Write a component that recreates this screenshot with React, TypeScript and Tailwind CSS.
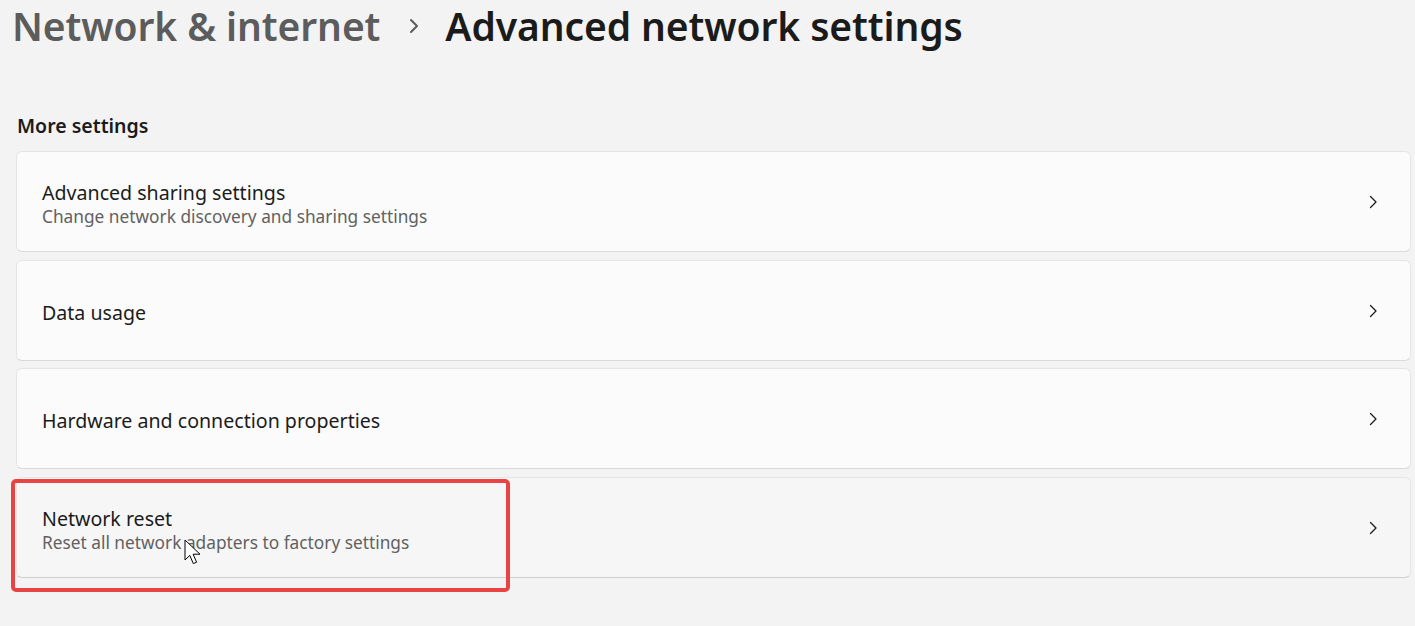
import React from "react";

const Chevron = () => (
  <svg width="16" height="16" viewBox="0 0 16 16" fill="none">
    <path d="M5.5 2.5 L11 8 L5.5 13.5" stroke="#1b1b1b" strokeWidth="1.3" strokeLinecap="round" strokeLinejoin="round" />
  </svg>
);

const Card = ({ title, subtitle, hovered, className = "" }: { title: string; subtitle?: string; hovered?: boolean; className?: string }) => (
  <div
    className={`h-[101px] flex items-center justify-between rounded-[6px] border border-[#e5e5e5] pl-[25px] pr-[29px] ${
      hovered ? "bg-[#f6f6f6] border-b-[#cfcfcf]" : "bg-[#fbfbfb] border-b-[#d9d9d9]"
    } ${className}`}
  >
    <div className="flex flex-col pt-[4px]">
      <div className="text-[19.6px] leading-[26px] text-[#1b1b1b]">{title}</div>
      {subtitle && <div className="text-[17.3px] leading-[22px] text-[#616161]">{subtitle}</div>}
    </div>
    <Chevron />
  </div>
);

export default function App() {
  return (
    <div
      className="w-[1415px] h-[626px] bg-[#f3f3f3] overflow-hidden"
      style={{ fontFamily: '"Noto Sans", "Open Sans", sans-serif' }}
    >
      <div className="flex items-center h-[54px] pl-[12px] pb-[2px] font-semibold text-[39px] leading-[48px] tracking-[-0.1px]">
        <span className="text-[#5c5c5c]">Network &amp; internet</span>
        <span className="ml-[27px] mr-[24px] flex items-center">
          <svg width="14" height="18" viewBox="0 0 14 18" fill="none">
            <path d="M4 3 L10 9 L4 15" stroke="#5c5c5c" strokeWidth="2" strokeLinecap="round" strokeLinejoin="round" />
          </svg>
        </span>
        <span className="text-[#1b1b1b]">Advanced network settings</span>
      </div>
      <div className="pl-[17px] mt-[59px] text-[19.5px] leading-[26px] font-semibold text-[#1b1b1b]">More settings</div>
      <div className="flex flex-col pl-[16px] pr-[4px] mt-[12px]">
        <Card title="Advanced sharing settings" subtitle="Change network discovery and sharing settings" />
        <Card title="Data usage" className="mt-[8px]" />
        <Card title="Hardware and connection properties" className="mt-[7px]" />
        <div className="relative mt-[8px]">
          <Card title="Network reset" subtitle="Reset all network adapters to factory settings" hovered />
          <div className="absolute left-[-5px] top-[2px] w-[499px] h-[113px] border-[4px] border-[#e94444] rounded-[5px] pointer-events-none" />
          <svg className="absolute left-[168px] top-[62px]" width="20" height="28" viewBox="0 0 20 28">
            <path d="M1 1 L1 21 L5.8 16.4 L9.3 24.6 L12.6 23.2 L9.1 15.2 L16 15.2 Z" fill="#ffffff" stroke="#000" strokeWidth="1" strokeLinejoin="round" />
          </svg>
        </div>
      </div>
    </div>
  );
}
